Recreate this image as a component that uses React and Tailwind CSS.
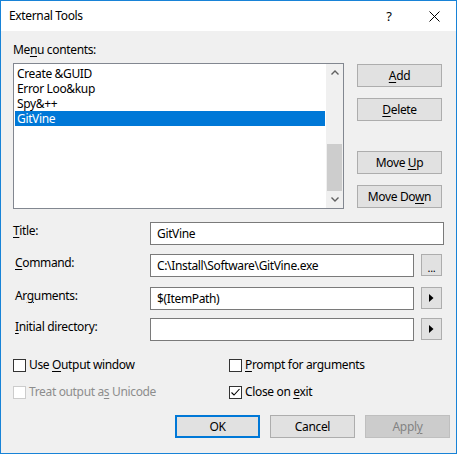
import React from 'react'

const font = 'font-["Segoe_UI","Noto_Sans",sans-serif]'

function U({ children }) {
  return <span className="underline decoration-1 underline-offset-[2px]">{children}</span>
}

function Button({ children, className = '', disabled = false, primary = false }) {
  return (
    <div
      className={`flex h-[23px] w-[85px] items-center justify-center ${
        primary
          ? 'border-2 border-[#0078d7] bg-[#e1e1e1]'
          : disabled
            ? 'border border-[#bfbfbf] bg-[#cccccc] text-[#838383]'
            : 'border border-[#adadad] bg-[#e1e1e1]'
      } ${className}`}
    >
      <span>{children}</span>
    </div>
  )
}

function SmallButton({ children, className = '' }) {
  return (
    <div className={`ml-[7px] flex h-[22px] w-[21px] items-center justify-center border border-[#adadad] bg-[#e1e1e1] ${className}`}>
      {children}
    </div>
  )
}

function Arrow() {
  return (
    <svg width="5" height="8" viewBox="0 0 5 8">
      <path d="M0 0 L4.5 4 L0 8 Z" fill="#000" />
    </svg>
  )
}

function Field({ label, value, width, labelClass = '', extra = null, className = '' }) {
  return (
    <div className={`flex items-start ${className}`}>
      <div className={`w-[137px] pt-[1px] ${labelClass}`}>{label}</div>
      <div className="flex h-[23px] items-center border border-[#7a7a7a] bg-white px-[6px]" style={{ width }}>
        <span>{value}</span>
      </div>
      {extra}
    </div>
  )
}

function Checkbox({ checked = false, disabled = false, children }) {
  return (
    <div className={`flex items-center ${disabled ? 'text-[#8d8d8d]' : ''}`}>
      <div className={`flex h-[13px] w-[13px] items-center justify-center border bg-white ${disabled ? 'border-[#cccccc]' : 'border-[#333333]'}`}>
        {checked && (
          <svg width="11" height="11" viewBox="0 0 11 11">
            <path d="M1.5 5.5 L4 8 L9.5 2" stroke="#000" strokeWidth="1.1" fill="none" />
          </svg>
        )}
      </div>
      <span className="ml-[3px]">{children}</span>
    </div>
  )
}

const items = ['Create &GUID', 'Error Loo&kup', 'Spy&++', 'GitVine']

export default function App() {
  return (
    <div className={`flex h-[454px] w-[457px] flex-col border border-[#1883d7] text-[12px] leading-[16px] tracking-[-0.35px] text-black ${font}`}>
      <div className="flex h-[30px] shrink-0 items-center bg-white">
        <span className="pl-[8px]">External Tools</span>
        <div className="ml-auto flex w-[46px] items-center justify-center text-[13px]">?</div>
        <div className="flex w-[44px] items-center justify-center">
          <svg width="11" height="11" viewBox="0 0 11 11">
            <path d="M0.5 0.5 L10.5 10.5 M10.5 0.5 L0.5 10.5" stroke="#000" strokeWidth="1" />
          </svg>
        </div>
      </div>

      <div className="flex flex-1 flex-col bg-[#f0f0f0] pl-[12px] pr-[6px] pt-[11px]">
        <div>Me<U>n</U>u contents:</div>

        <div className="mt-[5px] flex items-start">
          <div className="flex h-[146px] w-[331px] border border-[#828790] bg-white">
            <div className="flex-1 px-[1px] pt-[2px]">
              {items.map((item, i) => (
                <div
                  key={item}
                  className={`h-[15px] overflow-hidden pl-[2px] leading-[15px] ${i === 3 ? 'bg-[#0078d7] text-white' : ''}`}
                >
                  {item}
                </div>
              ))}
            </div>
            <div className="flex w-[17px] flex-col bg-[#f0f0f0]">
              <div className="flex h-[17px] items-center justify-center">
                <svg width="8" height="5" viewBox="0 0 8 5">
                  <path d="M0.5 4.5 L4 1 L7.5 4.5" stroke="#606060" strokeWidth="1.4" fill="none" />
                </svg>
              </div>
              <div className="flex flex-1 flex-col justify-end">
                <div className="mx-[1px] h-[47px] bg-[#cdcdcd]" />
              </div>
              <div className="flex h-[17px] items-center justify-center">
                <svg width="8" height="5" viewBox="0 0 8 5">
                  <path d="M0.5 0.5 L4 4 L7.5 0.5" stroke="#606060" strokeWidth="1.4" fill="none" />
                </svg>
              </div>
            </div>
          </div>

          <div className="ml-[13px] flex flex-col pt-[1px]">
            <Button><U>A</U>dd</Button>
            <Button className="mt-[11px]"><U>D</U>elete</Button>
            <Button className="mt-[30px]">Move <U>U</U>p</Button>
            <Button className="mt-[11px]">Move Do<U>w</U>n</Button>
          </div>
        </div>

        <Field className="mt-[13px]" label={<><U>T</U>itle:</>} value="GitVine" width={294} />
        <Field
          className="mt-[9px]"
          labelClass="pl-[2px]"
          label={<><U>C</U>ommand:</>}
          value="C:\Install\Software\GitVine.exe"
          width={264}
          extra={<SmallButton><span className="mt-[5px] text-[11px]">...</span></SmallButton>}
        />
        <Field
          className="mt-[10px]"
          labelClass="pl-[2px]"
          label={<>Ar<U>g</U>uments:</>}
          value="$(ItemPath)"
          width={264}
          extra={<SmallButton><Arrow /></SmallButton>}
        />
        <Field
          className="mt-[8px]"
          labelClass="pl-[2px]"
          label={<><U>I</U>nitial directory:</>}
          value=""
          width={264}
          extra={<SmallButton><Arrow /></SmallButton>}
        />

        <div className="mt-[16px] flex">
          <div className="w-[216px]">
            <Checkbox>Use <U>O</U>utput window</Checkbox>
          </div>
          <Checkbox><U>P</U>rompt for arguments</Checkbox>
        </div>
        <div className="mt-[11px] flex">
          <div className="w-[216px]">
            <Checkbox disabled>Treat output a<U>s</U> Unicode</Checkbox>
          </div>
          <Checkbox checked>Close on <U>e</U>xit</Checkbox>
        </div>

        <div className="mt-[15px] flex justify-end">
          <Button primary>OK</Button>
          <Button className="ml-[10px]">Cancel</Button>
          <Button className="ml-[10px]" disabled>Appl<U>y</U></Button>
        </div>
      </div>
    </div>
  )
}
